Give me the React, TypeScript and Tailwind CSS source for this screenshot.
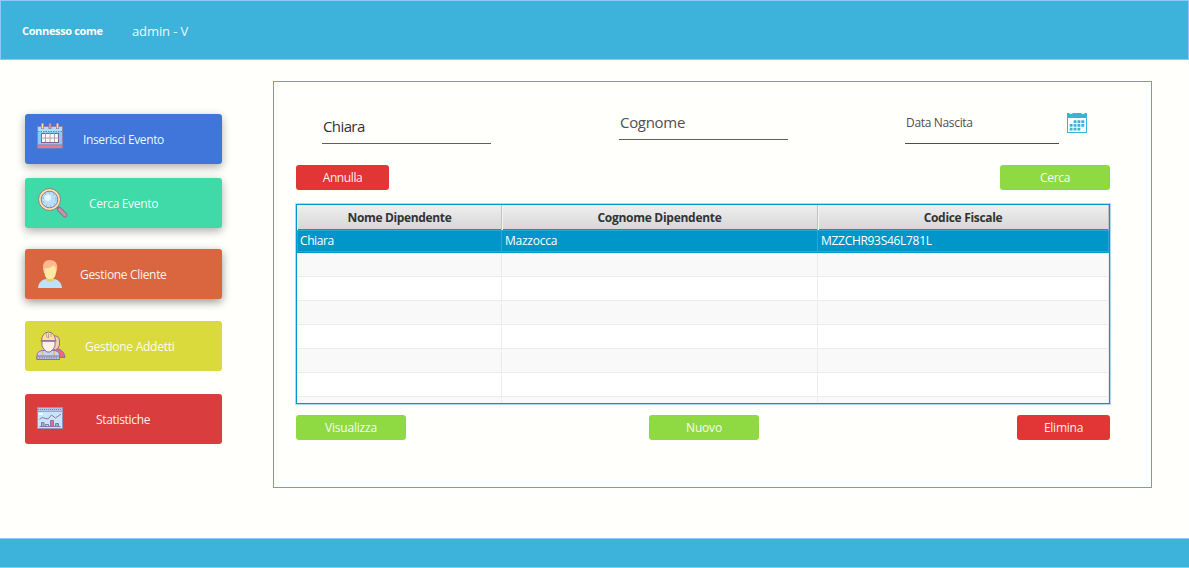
import type { ReactNode } from "react";

function EventIcon() {
  return (
    <svg width="26" height="28" viewBox="0 0 26 28">
      <rect x="0.5" y="3.5" width="25" height="21.5" fill="#83cdf8" stroke="#8a83b4" />
      <rect x="1" y="4" width="24" height="5" fill="#a9e1fc" />
      <path d="M1 8.5h24" stroke="#7f7bb0" strokeDasharray="1.5 1" />
      <rect x="1" y="22.5" width="24" height="2.500" fill="#ee7693" />
      <path d="M1 22h24" stroke="#9c6b91" />
      <rect x="4.500" y="10.500" width="17" height="9" fill="#fff9f3" stroke="#80628d" />
      <path d="M4 15h18M8.500 10v9M13 10v9M17.500 10v9" stroke="#a895b3" strokeWidth="0.9" />
      <path d="M5.500 0v6M13 0v6M20.500 0v6" stroke="#8b719f" strokeWidth="3" />
      <path d="M5.500 0.500v5M20.500 0.500v5" stroke="#ffe4a0" strokeWidth="1.600" />
      <path d="M13 0.500v5" stroke="#c8a2a5" strokeWidth="1.600" />
    </svg>
  );
}

function SearchIcon() {
  return (
    <svg width="32" height="32" viewBox="0 0 32 32">
      <path d="M20 20l3.5 3.5" stroke="#826a99" strokeWidth="3" />
      <path d="M22.5 22.5l5.500 5.500" stroke="#8a6f99" strokeWidth="5" strokeLinecap="round" />
      <path d="M22.5 22.5l5.500 5.500" stroke="#c9959e" strokeWidth="3" strokeLinecap="round" />
      <circle cx="12.5" cy="12.5" r="11" fill="#ffe29a" stroke="#8c789e" />
      <circle cx="12.5" cy="12.5" r="8.3" fill="#b7e0fc" stroke="#8c789e" />
      <circle cx="12.5" cy="12.5" r="6.5" fill="none" stroke="#7d95c8" strokeDasharray="1 3.2" />
      <circle cx="10.8" cy="10.8" r="3.3" fill="#e7f6ff" />
    </svg>
  );
}

function ClientIcon() {
  return (
    <svg width="24" height="29" viewBox="0 0 24 29">
      <path d="M0 29C.5 23.500 4 20.500 8.500 20h7c4.500.5 8 3.500 8.500 9z" fill="#bde3fc" />
      <path d="M8.500 17h7v5q-3.500 1.500-7 0z" fill="#e2cd73" />
      <path d="M5 10Q4 1 12 1q8.500 0 7 10l-1 3H6z" fill="#ffb990" />
      <path d="M6.500 9.500q4 0 6.500-1.500L16 6.500Q18 8 18 11v2q-.5 6-4 7h-4q-3.200-1-3.500-7z" fill="#ffeaa3" />
    </svg>
  );
}

function WorkersIcon() {
  return (
    <svg width="30" height="30" viewBox="0 0 30 30" stroke="#8b719f" strokeWidth="1">
      <path d="M19 18h4q5.500 2.500 6 8.500h-6z" fill="#f0648a" />
      <path d="M17 5q6.500-1 6.500 5v4q-1 4-4 5l-4-2z" fill="#f6cfa8" />
      <path d="M1 28.500v-4q0-4 5-5h13q4.500 1 4.500 5v4z" fill="#c4d5ed" />
      <path d="M6 10v5q1 3.500 5 6h3q4-2.500 5-6v-5z" fill="#fff0e4" />
      <path d="M5.500 9.700Q6 1.500 12.500 1q6.500.5 7 8.700z" fill="#ffe0a0" />
      <path d="M4.500 10h16" fill="none" />
      <path d="M10.300 2v3.500l2.200 1.500V2.500M15 2v4" fill="none" stroke="#a98b97" strokeWidth="0.8" />
      <path d="M6.500 20v5M18 20v5" stroke="#e7bc8b" strokeWidth="2" />
      <path d="M1 25h22.500v3.500H1z" fill="#b3c2e6" />
      <path d="M3 26.800h19" strokeDasharray="1.200 1.200" />
    </svg>
  );
}

function StatsIcon() {
  return (
    <svg width="26" height="22" viewBox="0 0 26 22">
      <rect x="0.5" y="0.5" width="25" height="21" fill="#c5e6fb" stroke="#8f94c2" />
      <path d="M1 1h24v3H1z" fill="#b2c4e6" />
      <path d="M1 2.500h24" stroke="#857fae" strokeDasharray="1 1" />
      <path d="M1 4.500h24" stroke="#97a7d0" />
      <path d="M2 6h4v2H2z" fill="#f0faff" />
      <path d="M2.500 12.500L5 10.500l6 1.500 3.500-4 4 3L24 7" fill="none" stroke="#9475a0" />
      <g stroke="#8c75a5">
        <path d="M4.500 15.500h2.500v4h-2.500z" fill="#80bce8" />
        <path d="M8.500 17.500h3v2h-3z" fill="#fbd795" />
        <path d="M13.500 13.500h3v6h-3z" fill="#ee658a" />
        <path d="M18.500 16.500h3v3h-3z" fill="#74c9ad" />
        <path d="M2.500 19.500h21" />
      </g>
    </svg>
  );
}

function CalendarIcon() {
  return (
    <svg width="20" height="20" viewBox="0 0 20 20">
      <path d="M0 0h20v20H0z" fill="#3db2d9" />
      <path d="M1 5h18v14H1z" fill="#fff" />
      <path d="M2.500 0h3v1h-3zM14.500 0h3v1h-3z" fill="#e6f6fb" />
      <path d="M6.600 8.600H18M2.700 12.400H18M2.700 16.200h11" stroke="#3db2d9" strokeWidth="2.700" strokeDasharray="2.900 0.980" />
    </svg>
  );
}

interface MenuButtonProps {
  icon: ReactNode;
  label: string;
  tone: string;
  iconBox: string;
  labelBox: string;
}

function MenuButton({ icon, label, tone, iconBox, labelBox }: MenuButtonProps) {
  return (
    <button className={`flex h-[50px] w-[197px] shrink-0 items-start rounded-[3px] text-left text-[12px] leading-4 text-white/95 ${tone}`}>
      <span className={`w-[46px] shrink-0 ${iconBox}`}>{icon}</span>
      <span className={`pt-[18px] whitespace-nowrap ${labelBox}`}>{label}</span>
    </button>
  );
}

function ActionButton({ label, tone }: { label: string; tone: string }) {
  return <button className={`h-[25px] shrink-0 rounded-[3px] text-[12px] leading-[25px] text-white/95 ${tone}`}>{label}</button>;
}

const columns = "grid grid-cols-[205px_316px_291px]";
const emptyRows = ["bg-[#f9f9f9]", "bg-white", "bg-[#f9f9f9]", "bg-white", "bg-[#f9f9f9]", "bg-white"];

function ResultsTable() {
  const head = "border-r border-b border-[#c1c1c1] shadow-[inset_1px_1px_0_#f6f6f6] leading-[25px]";
  const cell = "border-y border-r border-[#29a6d5] pl-[3px]";
  return (
    <div className="h-[200px] w-[814px] overflow-hidden border border-[#0096c9] bg-white text-[12px] shadow-[0_0_0_1px_#a9dced]">
      <div className={`${columns} h-6 bg-linear-to-b from-[#efefef] to-[#d7d7d7] text-center font-bold text-[#333]`}>
        <span className={`${head} pl-px tracking-[-0.36px]`}>Nome Dipendente</span>
        <span className={`${head} tracking-[-0.28px]`}>Cognome Dipendente</span>
        <span className={`${head} tracking-[-0.32px]`}>Codice Fiscale</span>
      </div>
      <div className={`${columns} h-6 border-y border-[#0096c9] bg-[#0096c9] leading-[20px] text-white`}>
        <span className={`${cell} border-l !pl-[2px] tracking-[-0.4px]`}>Chiara</span>
        <span className={`${cell} tracking-[-0.25px]`}>Mazzocca</span>
        <span className={`${cell} tracking-[-0.3px]`}>MZZCHR93S46L781L</span>
      </div>
      {emptyRows.map((tone, i) => (
        <div key={i} className={`${columns} h-6 ${tone}`}>
          <span className="border-r border-b border-[#ececec]" />
          <span className="border-r border-b border-[#ececec]" />
          <span className="border-r border-b border-[#ececec]" />
        </div>
      ))}
      <div className={`${columns} h-6 bg-[#f9f9f9]`}>
        <span className="border-r border-[#ececec]" />
        <span className="border-r border-[#ececec]" />
        <span className="border-r border-[#ececec]" />
      </div>
    </div>
  );
}

export default function App() {
  return (
    <div className="flex h-[568px] w-[1189px] flex-col overflow-hidden bg-[#fffffc] font-['Open_Sans',sans-serif]">
      <header className="flex h-[60px] shrink-0 items-center gap-[29px] border border-[#8fc7fa] bg-[#3db2da] pt-[3px] pl-[21px] text-white">
        <span className="w-[81px] text-[11px] font-bold whitespace-nowrap tracking-[-0.35px]">Connesso come</span>
        <span className="text-[13px] whitespace-nowrap tracking-[-0.1px] text-white/90">admin - V</span>
      </header>

      <main className="flex h-[478px] shrink-0 items-start pt-[21px] pl-[25px]">
        <nav className="flex w-[197px] flex-col pt-[33px]">
          <MenuButton icon={<EventIcon />} label="Inserisci Evento" tone="bg-[#4076da] shadow-[0_3px_10px_rgba(0,0,0,0.33)]" iconBox="pt-[9px] pl-[12px]" labelBox="pl-[12px] tracking-[-0.38px]" />
          <MenuButton icon={<SearchIcon />} label="Cerca Evento" tone="mt-[14px] bg-[#40daa8] shadow-[0_3px_10px_rgba(0,0,0,0.33)]" iconBox="pt-[9px] pl-[12px]" labelBox="pl-[18px] tracking-[-0.33px]" />
          <MenuButton icon={<ClientIcon />} label="Gestione Cliente" tone="mt-[21px] bg-[#da6640] shadow-[0_3px_10px_rgba(0,0,0,0.42)]" iconBox="pt-[10px] pl-[13px]" labelBox="pl-[9px] tracking-[-0.32px]" />
          <MenuButton icon={<WorkersIcon />} label="Gestione Addetti" tone="mt-[22px] bg-[#dada3d]" iconBox="pt-[10px] pl-[11px]" labelBox="pl-[14px] tracking-[-0.25px]" />
          <MenuButton icon={<StatsIcon />} label="Statistiche" tone="mt-[23px] bg-[#da3d3d]" iconBox="pt-[13px] pl-[12px]" labelBox="pl-[25px] tracking-[-0.33px]" />
        </nav>

        <section className="ml-[51px] flex h-[407px] w-[879px] flex-col border border-[#3db2da] pl-[22px]">
          <div className="flex h-[83px] items-start pl-[26px] text-[#3c3c3c]">
            <div className="mt-[34px] h-[28px] w-[169px] border-b border-[#5f5f5d] pl-px text-[15px] leading-[20px] tracking-[-0.6px] text-[#333]">Chiara</div>
            <div className="mt-[30px] ml-[128px] h-[28px] w-[169px] border-b border-[#5f5f5d] pl-px text-[15px] leading-[20px] tracking-[-0.3px] text-[#505050]">Cognome</div>
            <div className="mt-[30px] ml-[117px] h-[32px] w-[154px] border-b border-[#4d4d4d] pl-px text-[12px] leading-[22px] tracking-[-0.33px] text-[#505050]">Data Nascita</div>
            <div className="mt-[31px] ml-[8px]"><CalendarIcon /></div>
          </div>
          <div className="flex w-[814px] justify-between">
            <ActionButton label="Annulla" tone="w-[93px] bg-[#e23636] tracking-[-0.4px]" />
            <ActionButton label="Cerca" tone="w-[110px] bg-[#8fda43] tracking-[-0.3px]" />
          </div>
          <div className="mt-[14px]"><ResultsTable /></div>
          <div className="mt-[11px] flex w-[814px]">
            <ActionButton label="Visualizza" tone="w-[110px] bg-[#8fda43] tracking-[-0.2px]" />
            <ActionButton label="Nuovo" tone="ml-[243px] w-[110px] bg-[#8fda43] tracking-[-0.2px]" />
            <ActionButton label="Elimina" tone="ml-[258px] w-[93px] bg-[#e23636] tracking-[-0.25px]" />
          </div>
        </section>
      </main>

      <footer className="h-[30px] shrink-0 border-y border-[#8fc7fa] bg-[#3db2da]" />
    </div>
  );
}
